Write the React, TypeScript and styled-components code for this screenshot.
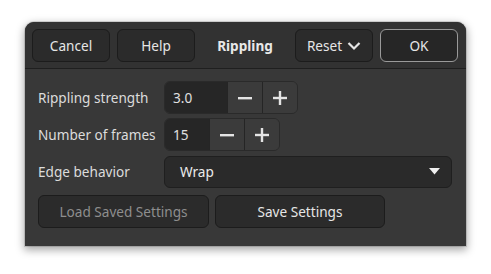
import React from "react";
import styled, { createGlobalStyle } from "styled-components";

const GlobalStyle = createGlobalStyle`
  html, body {
    margin: 0;
    padding: 0;
    background: #ffffff;
    font-family: "Noto Sans", "DejaVu Sans", sans-serif;
  }
`;

const Page = styled.div`
  width: 491px;
  height: 274px;
  padding: 22px 25px 28px 25px;
  box-sizing: border-box;
`;

const Window = styled.div`
  width: 441px;
  height: 224px;
  background: #383838;
  border-radius: 9px 9px 0 0;
  box-shadow: 0 3px 9px 1px rgba(0, 0, 0, 0.35), 0 0 0 1px rgba(0, 0, 0, 0.12);
  display: flex;
  flex-direction: column;
  overflow: hidden;
`;

const HeaderBar = styled.div`
  height: 47px;
  box-sizing: border-box;
  background: #323232;
  border-bottom: 1px solid #1f1f1f;
  display: grid;
  grid-template-columns: 78px 78px 1fr 78px 78px;
  column-gap: 7px;
  padding: 7px 8px 0 7px;
  align-items: start;
`;

const Title = styled.div`
  height: 33px;
  display: flex;
  align-items: center;
  justify-content: center;
  color: #e8e8e8;
  font-weight: 700;
  font-size: 13.6px;
`;

const Button = styled.button<{ $suggested?: boolean; $disabled?: boolean }>`
  height: 33px;
  box-sizing: border-box;
  border-radius: 6px;
  border: 1px solid ${(p) => (p.$suggested ? "#9a9a9a" : "#1c1c1c")};
  background: ${(p) => (p.$suggested ? "#262626" : "#2b2b2b")};
  color: ${(p) => (p.$disabled ? "#8e8e8e" : "#e6e6e6")};
  font-family: "Noto Sans", "DejaVu Sans", sans-serif;
  font-size: 13.6px;
  display: flex;
  align-items: center;
  justify-content: center;
  gap: 5px;
  padding: 0;
`;

const Body = styled.div`
  flex: 1;
  padding: 12px 14px 0 13px;
  display: flex;
  flex-direction: column;
  gap: 4px;
`;

const Row = styled.div`
  display: grid;
  grid-template-columns: 126px 1fr;
  align-items: center;
  height: 33px;
`;

const Label = styled.div`
  color: #dcdcdc;
  font-size: 13.6px;
`;

const Spin = styled.div`
  display: flex;
  height: 33px;
  box-sizing: border-box;
  border: 1px solid #2a2a2a;
  border-radius: 6px;
  overflow: hidden;
  width: max-content;
`;

const SpinEntry = styled.div<{ $w: number }>`
  width: ${(p) => p.$w}px;
  background: #262626;
  color: #e0e0e0;
  font-size: 13.6px;
  display: flex;
  align-items: center;
  padding-left: 8px;
  box-sizing: border-box;
`;

const SpinButton = styled.div`
  width: 34px;
  background: #3b3b3b;
  border-left: 1px solid #252525;
  display: flex;
  align-items: center;
  justify-content: center;
`;

const Combo = styled.div`
  height: 32px;
  box-sizing: border-box;
  background: #2a2a2a;
  border: 1px solid #1f1f1f;
  border-radius: 6px;
  display: flex;
  align-items: center;
  justify-content: space-between;
  padding: 0 11px 0 15px;
  color: #ececec;
  font-size: 13.6px;
`;

const ButtonRow = styled.div`
  display: grid;
  grid-template-columns: 171px 170px;
  column-gap: 6px;
  margin-top: 3px;
`;

const Minus = () => (
  <svg width="14" height="14" viewBox="0 0 14 14">
    <rect x="0" y="6" width="14" height="2.4" fill="#e4e4e4" />
  </svg>
);

const Plus = () => (
  <svg width="14" height="14" viewBox="0 0 14 14">
    <rect x="0" y="5.8" width="14" height="2.4" fill="#e4e4e4" />
    <rect x="5.8" y="0" width="2.4" height="14" fill="#e4e4e4" />
  </svg>
);

const Chevron = () => (
  <svg width="14" height="10" viewBox="0 0 14 10">
    <path d="M1.5 2 L7 7.5 L12.5 2" stroke="#e6e6e6" strokeWidth="2.2" fill="none" />
  </svg>
);

const Arrow = () => (
  <svg width="11" height="7" viewBox="0 0 11 7">
    <path d="M0 0 H11 L5.5 6.5 Z" fill="#f0f0f0" />
  </svg>
);

const App: React.FC = () => {
  return (
    <Page>
      <GlobalStyle />
      <Window>
        <HeaderBar>
          <Button>Cancel</Button>
          <Button>Help</Button>
          <Title>Rippling</Title>
          <Button>
            Reset <Chevron />
          </Button>
          <Button $suggested>OK</Button>
        </HeaderBar>
        <Body>
          <Row>
            <Label>Rippling strength</Label>
            <Spin>
              <SpinEntry $w={62}>3.0</SpinEntry>
              <SpinButton>
                <Minus />
              </SpinButton>
              <SpinButton>
                <Plus />
              </SpinButton>
            </Spin>
          </Row>
          <Row>
            <Label>Number of frames</Label>
            <Spin>
              <SpinEntry $w={44}>15</SpinEntry>
              <SpinButton>
                <Minus />
              </SpinButton>
              <SpinButton>
                <Plus />
              </SpinButton>
            </Spin>
          </Row>
          <Row>
            <Label>Edge behavior</Label>
            <Combo>
              Wrap
              <Arrow />
            </Combo>
          </Row>
          <ButtonRow>
            <Button $disabled>Load Saved Settings</Button>
            <Button>Save Settings</Button>
          </ButtonRow>
        </Body>
      </Window>
    </Page>
  );
};

export default App;
